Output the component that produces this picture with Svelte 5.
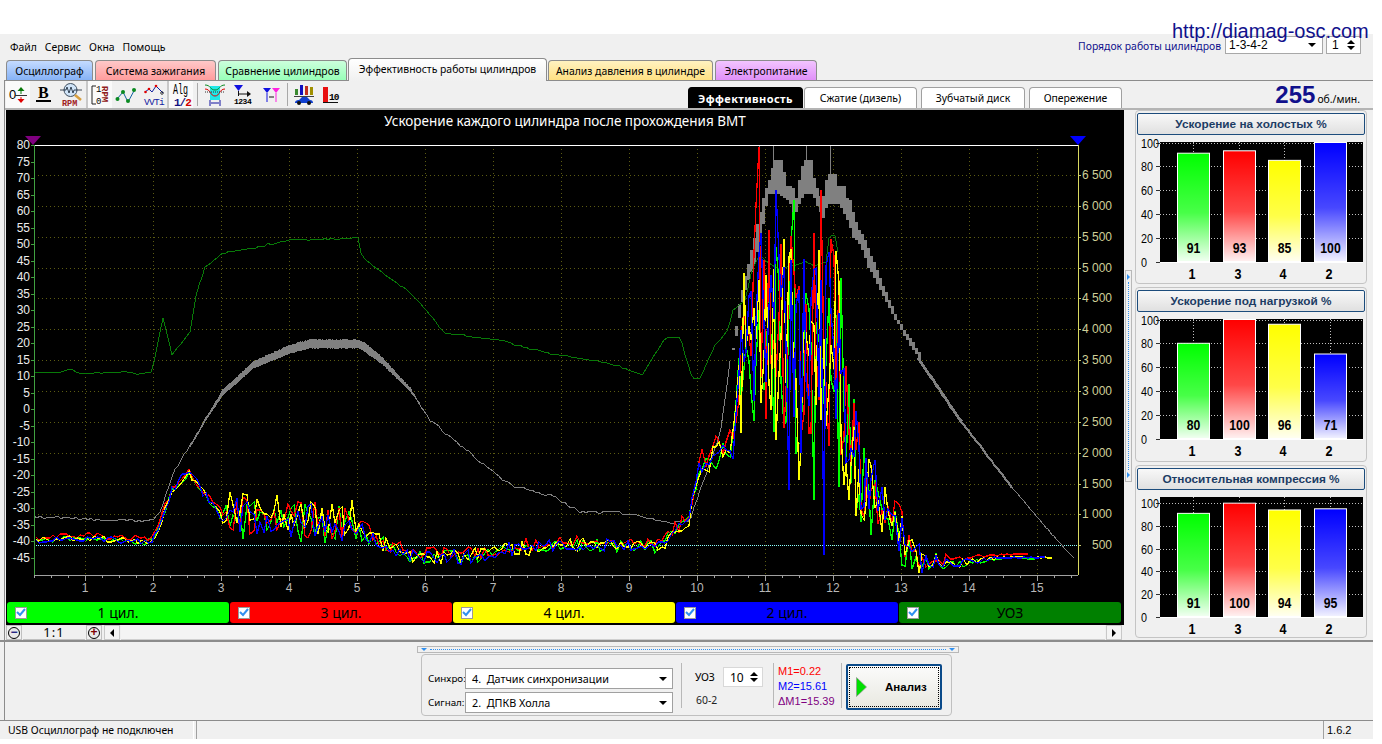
<script>
  // ---------- chart data ----------
  function rng(seed) {
    let s = seed;
    return () => {
      s = (s * 1664525 + 1013904223) % 4294967296;
      return s / 4294967296;
    };
  }
  const interp = (pts, x) => {
    if (x <= pts[0][0]) return pts[0][1];
    for (let i = 1; i < pts.length; i++) {
      if (x <= pts[i][0]) {
        const [a, b] = pts[i - 1];
        const [c, d] = pts[i];
        return b + ((d - b) * (x - a)) / (c - a);
      }
    }
    return pts[pts.length - 1][1];
  };
  const toLine = (pts) => pts.map((p) => p[0].toFixed(0) + ',' + p[1].toFixed(0)).join(' ');

  const base = [[34,541],[60,538],[90,538],[120,540],[150,541],[158,530],[172,490],[182,478],[190,474],[200,488],[212,505],[222,517],[300,522],[358,525],[375,540],[400,552],[424,558],[470,556],[510,549],[560,545],[600,544],[660,546],[675,532],[690,518],[698,470],[715,455],[735,440],[745,340],[760,330],[800,345],[830,345],[842,380],[850,430],[858,470],[867,490],[880,500],[890,517],[902,540],[917,555],[935,562],[960,563],[985,559],[1005,557],[1053,557]];
  const amp = [[34,3],[150,3],[160,4],[222,5],[230,20],[350,20],[365,10],[420,8],[660,6],[690,8],[735,16],[745,100],[840,115],[850,75],[858,50],[867,40],[880,38],[890,22],[902,25],[917,18],[935,10],[960,4],[985,2],[1005,1],[1053,0.5]];
  const bias = [[34,0],[222,0],[232,-9],[350,-9],[365,0],[1053,0]];

  const seriesDefs = [
    { color: '#00ff00', seed: 11, off: 3, b: 0, end: 1036, spikes: { 793: 200, 815: 500 } },
    { color: '#ff0000', seed: 29, off: -8, b: 0.1, end: 1028, spikes: { 759: 147, 756: 205, 822: 190, 769: 230, 840: 280 } },
    { color: '#ffff00', seed: 47, off: 1, b: 1, end: 1053, spikes: { 818: 250, 776: 440, 800: 480 } },
    { color: '#0000ff', seed: 83, off: 2, b: 0.2, end: 1045, spikes: { 777: 190, 823: 555, 790: 490 } }
  ];
  const series = seriesDefs.map((d) => {
    const r = rng(d.seed);
    const pts = [];
    let x = 34 + (d.seed % 3);
    while (x <= d.end) {
      const a = interp(amp, x);
      const y = interp(base, x) + (x > 700 && x < 900 ? d.off : d.off / 3) + d.b * interp(bias, x) + (r() - 0.5) * 2 * a;
      pts.push([x, Math.min(574, y)]);
      x += x > 735 && x < 870 ? 2.5 : 3.4;
    }
    for (const k of Object.keys(d.spikes)) {
      const sx = +k;
      let best = 0;
      pts.forEach((p, i) => {
        if (Math.abs(p[0] - sx) < Math.abs(pts[best][0] - sx)) best = i;
      });
      pts[best][1] = d.spikes[k];
    }
    return { color: d.color, line: toLine(pts) };
  });

  const uozCurve = [[34,372],[60,372],[70,369],[80,373],[110,373],[125,371],[140,374],[152,372],[163,318],[172,355],[190,332],[197,290],[205,268],[225,252],[240,250],[260,246],[275,243],[290,240],[325,239],[358,238],[362,257],[385,275],[410,292],[445,333],[470,336],[500,340],[530,349],[560,355],[590,360],[620,366],[642,375],[665,338],[680,337],[692,378],[700,378],[715,345],[728,330],[733,310],[745,300],[752,270],[760,255],[775,268],[790,267],[805,262],[815,266],[826,262],[828,240],[834,232],[838,252]];
  const uozR = rng(17);
  const uozPts = [];
  for (let x = 34; x <= 838; x += 3) {
    uozPts.push([x, interp(uozCurve, x) + (x > 225 && x < 358 ? (uozR() - 0.5) * 2 : (uozR() - 0.5) * 1.4)]);
  }
  const uoz = toLine(uozPts);

  const grayR = rng(5);
  const grayPts = [[34,517],[150,521],[160,512],[175,470],[195,438],[205,420],[222,393],[253,365],[290,349],[310,344],[358,344],[364,347],[383,362],[410,390],[430,420],[460,445],[490,470],[510,485],[550,495],[580,512],[620,512],[670,523],[690,520],[700,490],[720,435],[732,347]];
  const gray1 = [];
  for (let x = 34; x <= 732; x += 3) gray1.push([x, interp(grayPts, x) + (grayR() - 0.5) * 3]);
  const grayThin = toLine(gray1);

  // hump band: column rects whose thickness grows towards the plateau
  const humpThick = [[190,0.5],[205,1],[222,2.5],[253,3],[290,4],[358,4],[368,4],[383,3],[410,1.5],[420,0.5]];
  let hump = '';
  for (let x = 190; x < 420; x += 1) {
    const y = interp(grayPts, x);
    const t = interp(humpThick, x);
    hump += `M${x} ${(y - t - grayR() * 1.2).toFixed(0)}h1V${(y + t + grayR() * 0.8).toFixed(0)}h-1Z`;
  }

  // peak band: column rects between the traced outer and inner outlines
  const outer = [[732,347],[738,303],[747,263],[753,237],[762,198],[766,185],[770,173],[773,160],[780,160],[782,172],[785,173],[786,185],[792,187],[795,197],[797,185],[802,160],[810,160],[812,173],[815,185],[818,195],[822,195],[823,185],[828,173],[836,173],[837,185],[843,185],[844,197],[848,197],[851,208],[857,228],[863,238],[870,255],[877,273],[887,297],[897,320],[907,335],[920,355]];
  const inner = [[733,350],[738,317],[743,293],[747,280],[753,263],[760,237],[763,217],[767,195],[777,193],[783,197],[790,205],[793,218],[798,203],[803,193],[812,195],[815,205],[822,217],[827,203],[835,203],[839,205],[845,218],[852,237],[860,247],[867,267],[873,277],[883,297],[890,312],[900,330],[913,352],[920,362]];
  let band = '';
  for (let x = 732; x < 920; x += 3) {
    const t = Math.round(interp(outer, x) / 2) * 2;
    const b = Math.max(t + 2, Math.round(interp(inner, x) / 2) * 2);
    band += `M${x} ${t}h3V${b}h-3Z`;
  }
  const descent = [[918,358],[933,380],[960,420],[987,455],[1010,485],[1037,517],[1065,549],[1075,559]];
  const segment = (from, to) => {
    const out = [];
    for (let x = from; x <= to; x += 2) out.push([x, interp(descent, x) + (grayR() - 0.5)]);
    return toLine(out);
  };
  const grayDown3 = segment(918, 962);
  const grayDown2 = segment(960, 1012);
  const grayDown1 = segment(1010, 1075);

  // ---------- chart axes ----------
  const X0 = 17, DX = 68;
  const xMajors = Array.from({ length: 15 }, (_, i) => i + 1);
  const xMinors = Array.from({ length: 62 }, (_, i) => 34 + i * 17);
  const yLeft = Array.from({ length: 26 }, (_, i) => 80 - i * 5);
  const yPos = (v) => 145 + (80 - v) * 3.304;
  const yRight = Array.from({ length: 13 }, (_, i) => 6500 - i * 500);
  const rpmPos = (v) => 175 + (6500 - v) * 0.0617;
  const fmtRpm = (v) => (v >= 1000 ? `${Math.floor(v / 1000)} ${String(v % 1000).padStart(3, '0')}` : String(v));

  // ---------- side cards ----------
  const bars = [
    { n: '1', color: '#00ff00', id: 'g', x: 40 },
    { n: '3', color: '#ff0000', id: 'r', x: 86 },
    { n: '4', color: '#ffff00', id: 'y', x: 131 },
    { n: '2', color: '#0000ff', id: 'b', x: 177 }
  ];
  const cards = [
    { title: 'Ускорение на холостых %', values: [91, 93, 85, 100], top: 100 },
    { title: 'Ускорение под нагрузкой %', values: [80, 100, 96, 71], top: 100 },
    { title: 'Относительная компрессия %', values: [91, 100, 94, 95], top: 105 }
  ];
  const ticks = [0, 20, 40, 60, 80, 100];

  const legend = [
    { label: '1 цил.', cls: 'lg-g' },
    { label: '3 цил.', cls: 'lg-r' },
    { label: '4 цил.', cls: 'lg-y' },
    { label: '2 цил.', cls: 'lg-b' },
    { label: 'УОЗ', cls: 'lg-d' }
  ];
  const tabs = [
    { label: 'Осциллограф', cls: 't-blue' },
    { label: 'Система зажигания', cls: 't-pink' },
    { label: 'Сравнение цилиндров', cls: 't-green' },
    { label: 'Эффективность работы цилиндров', cls: 't-active' },
    { label: 'Анализ давления в цилиндре', cls: 't-yellow' },
    { label: 'Электропитание', cls: 't-violet' }
  ];
  const subtabs = [
    { label: 'Эффективность', cls: 'sel' },
    { label: 'Сжатие (дизель)', cls: 's2' },
    { label: 'Зубчатый диск', cls: 's3' },
    { label: 'Опережение', cls: 's4' }
  ];
</script>

<div class="page">
  <div class="url">http://diamag-osc.com</div>
  <div class="window">
    <div class="menubar">
      <span>Файл</span><span>Сервис</span><span>Окна</span><span>Помощь</span>
      <div class="order">
        <span class="order-label">Порядок работы цилиндров</span>
        <div class="combo-small">1-3-4-2<i class="arrow"></i></div>
        <div class="spin-small">1<b class="updown"><i class="up"></i><i class="arrow"></i></b></div>
      </div>
    </div>

    <div class="tabs">
      {#each tabs as t}
        <div class="tab {t.cls}">{t.label}</div>
      {/each}
    </div>

    <div class="content">
      <div class="toolbar">
        <div class="tb on w24">
          <svg width="20" height="20" viewBox="0 0 20 20"><text x="1" y="14" class="ic-t">0</text><path d="M7 10.500h12" stroke="#333"/><path d="M13 2l-3.500 4h7zM12.500 6h1v3h-1z" fill="#0a7a0a"/><path d="M13 18l-3.500-4h7zM12.500 12h1v3h-1z" fill="#e00000"/></svg>
        </div>
        <div class="tb w28">
          <svg width="18" height="20" viewBox="0 0 18 20"><text x="3" y="13" class="ic-b">B</text><rect x="1" y="15" width="15" height="2" fill="#000"/></svg>
        </div>
        <div class="tb w28">
          <svg width="24" height="25" viewBox="0 0 24 25"><circle cx="10.500" cy="8" r="6.500" fill="#d0e4f8" stroke="#405060"/><path d="M0 8h6l1-3 2 6 2-6 2 6 1-3h8" stroke="#102030" fill="none" stroke-width=".8"/><path d="M15 13l6 5" stroke="#d8a040" stroke-width="2.500"/><text x="2" y="24" class="ic-rpm">RPM</text></svg>
        </div>
        <div class="tb on w25 bl">
          <svg width="18" height="22" viewBox="0 0 18 22"><path d="M5 2H1v18h4" fill="none" stroke="#222"/><text x="5" y="8" class="ic-s">1</text><text x="5" y="20" class="ic-s">0</text><text x="0" y="0" class="ic-rpmv" transform="translate(11 2) rotate(90)">RPM</text></svg>
        </div>
        <div class="tb w28">
          <svg width="22" height="20" viewBox="0 0 22 20"><path d="M2 14l6-7 5 10 7-13" fill="none" stroke="#1060a0"/><circle cx="2.500" cy="14" r="2" fill="#0a8a20"/><circle cx="8" cy="7" r="2" fill="#0a8a20"/><circle cx="13" cy="16" r="2" fill="#0a8a20"/><circle cx="19" cy="5" r="2" fill="#0a8a20"/></svg>
        </div>
        <div class="tb w27">
          <svg width="20" height="23" viewBox="0 0 20 23"><path d="M1 9l4-3 3 3 4-6 4 4 3 3" fill="none" stroke="#1020a0"/><circle cx="1.500" cy="9" r="1.300" fill="#e00000"/><circle cx="5" cy="6" r="1.300" fill="#e00000"/><circle cx="12" cy="3" r="1.300" fill="#e00000"/><circle cx="18" cy="10" r="1.300" fill="none" stroke="#101010" stroke-width=".8"/><text x="0" y="22" class="ic-vv">VVTi</text></svg>
        </div>
        <div class="tb on w26 bl">
          <svg width="16" height="25" viewBox="0 0 16 25"><text x="0" y="12" class="ic-alg" textLength="15" lengthAdjust="spacingAndGlyphs">Alg</text><text x="1" y="24" class="ic-frac" fill="#101080">1/<tspan fill="#d00000">2</tspan></text></svg>
        </div>
        <div class="tb-sep left"></div>
        <div class="tb w28">
          <svg width="20" height="23" viewBox="0 0 20 23"><path d="M5 3h10v14H5z" fill="#20e8e8"/><path d="M0 6c6 0 5 7 10 7s4-7 10-7" fill="none" stroke="#e00000"/><path d="M0 2c6 0 5 5 10 5s4-5 10-5" fill="none" stroke="#0a8a20"/><path d="M0 9h20" stroke="#303030" stroke-dasharray="1 1"/><path d="M5 17v6M15 17v6M6 20h8" stroke="#1010a0"/></svg>
        </div>
        <div class="tb w28">
          <svg width="18" height="21" viewBox="0 0 18 21"><path d="M0 1h9L4.500 7z" fill="#1010e0"/><path d="M4.500 7v5M4.500 10h9" stroke="#101010"/><path d="M13 7l4 3-4 3z" fill="#101010"/><text x="0" y="20" class="ic-1234">1234</text></svg>
        </div>
        <div class="tb w28">
          <svg width="17" height="18" viewBox="0 0 17 18"><path d="M0 2h8L4 7z" fill="#1010e0"/><path d="M4 7v9" stroke="#1010e0"/><path d="M9 2h8l-4 5z" fill="#ff20e0"/><path d="M13 7v9" stroke="#ff20e0"/><path d="M6 11h5" stroke="#101010"/></svg>
        </div>
        <div class="tb-sep"></div>
        <div class="tb w28">
          <svg width="20" height="22" viewBox="0 0 20 22"><rect x="1" y="5" width="3" height="6" fill="#3a8a30"/><rect x="6" y="1" width="3" height="10" fill="#1010c0"/><rect x="11" y="2" width="3" height="9" fill="#c03020"/><rect x="16" y="3" width="3" height="8" fill="#a09000"/><path d="M0 12.500h20" stroke="#404040"/><path d="M1 19c0-3 3-3 4-3l3-3h5l3 3c2 0 3 1 3 3z" fill="#1040d0"/><circle cx="5" cy="19" r="2" fill="#101010"/><circle cx="15" cy="19" r="2" fill="#101010"/></svg>
        </div>
        <div class="tb w24">
          <svg width="15" height="20" viewBox="0 0 15 20"><rect x="0" y="2" width="5" height="15" fill="#e81010"/><path d="M0 17.500h15" stroke="#101010"/><text x="6" y="15" class="ic-10">10</text></svg>
        </div>
        <div class="subtabs">
          {#each subtabs as s}
            <div class="subtab {s.cls}">{s.label}</div>
          {/each}
        </div>
        <div class="rpm"><b>255</b><span>об./мин.</span></div>
      </div>

      <div class="main">
        <div class="left-col">
          <svg class="chart" width="1118" height="490" viewBox="6 110 1118 490">
            <text x="565" y="126" class="title" text-anchor="middle">Ускорение каждого цилиндра после прохождения ВМТ</text>

            {#each yRight as v}
              <line x1="34" x2="1078" y1={Math.round(rpmPos(v)) + 0.5} y2={Math.round(rpmPos(v)) + 0.5} class="grid" />
              <line x1="1078" x2="1081" y1={Math.round(rpmPos(v)) + 0.5} y2={Math.round(rpmPos(v)) + 0.5} stroke="#c8c870" />
              <text x="1112" y={rpmPos(v) + 4} class="rlabel" text-anchor="end">{fmtRpm(v)}</text>
            {/each}
            {#each xMajors as n}
              <line x1={X0 + n * DX + 0.5} x2={X0 + n * DX + 0.5} y1="145" y2="575" class="grid" />
              <text x={X0 + n * DX} y="592" class="xlabel" text-anchor="middle">{n}</text>
            {/each}
            {#each xMinors as x, i}
              <line x1={x + 0.5} x2={x + 0.5} y1="575" y2={(i % 4) === 3 ? 581 : 578} stroke="#a0a0a0" />
            {/each}
            {#each yLeft as v}
              <line x1="31" x2="34" y1={Math.round(yPos(v)) + 0.5} y2={Math.round(yPos(v)) + 0.5} stroke="#40a040" />
              <text x="30" y={yPos(v) + 4} class="ylabel" text-anchor="end">{v}</text>
            {/each}

            <line x1="34" x2="1078" y1="545.5" y2="545.5" class="cyan" />

            <polyline points={grayThin} class="gray" />
            <path d={hump} fill="#808080" shape-rendering="crispEdges" />
            <path d={band} fill="#808080" shape-rendering="crispEdges" />
            <path d="M759.500 146V200M773.500 146V170M806.500 146V170M830.500 146V180" stroke="#808080" shape-rendering="crispEdges" />
            <polyline points={grayDown3} class="gray w3" />
            <polyline points={grayDown2} class="gray w2" />
            <polyline points={grayDown1} class="gray" />

            <polyline points={uoz} class="uoz" />

            {#each series as s}
              <polyline points={s.line} stroke={s.color} class="cyl" />
            {/each}

            <line x1="34" x2="1078" y1="145.5" y2="145.5" stroke="#ffffff" />
            <line x1="34.5" x2="34.5" y1="145" y2="575" stroke="#40a040" />
            <line x1="1078.5" x2="1078.5" y1="145" y2="575" stroke="#d8d860" />
            <line x1="34" x2="1078" y1="575.5" y2="575.5" stroke="#a0a0a0" />
            <path d="M25 136h16l-8 9z" fill="#800080" />
            <path d="M1070 136h16l-8 9z" fill="#0000ff" />
          </svg>

          <div class="legend">
            {#each legend as l}
              <div class="lg {l.cls}">
                <span class="check"><svg width="10" height="9" viewBox="0 0 10 9"><path d="M1 4l3 3 5-6" fill="none" stroke="#3090f0" stroke-width="2" /></svg></span>
                <span class="lg-label">{l.label}</span>
              </div>
            {/each}
          </div>

          <div class="scrollrow">
            <span class="zoomb"><i class="circ">−</i></span>
            <span class="ratio">1:1</span>
            <span class="zoomb"><i class="circ plus">+</i></span>
            <span class="sb"><i class="tri-l"></i></span>
            <span class="track"></span>
            <span class="sb"><i class="tri-r"></i></span>
          </div>
        </div>

        <div class="vsplit">
          <div class="vhandle"><i class="tri-blue"></i><span class="dots"></span><i class="tri-blue"></i></div>
        </div>

        <div class="side">
          {#each cards as c}
            <section class="card">
              <div class="card-head">{c.title}</div>
              <svg width="228" height="146" viewBox="0 0 228 146" class="bar-svg">
                <defs>
                  {#each bars as b}
                    <linearGradient id="{b.id}{c.top}{c.values[0]}{c.values[1]}" x1="0" x2="0" y1="0" y2="1">
                      <stop offset="0" stop-color={b.color} />
                      <stop offset="0.55" stop-color={b.color} stop-opacity="0.72" />
                      <stop offset="1" stop-color={b.color} stop-opacity="0.06" />
                    </linearGradient>
                  {/each}
                </defs>
                <rect x="23" y="5" width="203" height="120" fill="#000" />
                {#each ticks as t}
                  {@const y = 124.5 - (t * 119) / c.top}
                  {#if t > 0}
                    <line x1="23" x2="226" y1={Math.round(y) + 0.5} y2={Math.round(y) + 0.5} class="b-grid" />
                  {/if}
                  <line x1="19" x2="23" y1={Math.round(y) + 0.5} y2={Math.round(y) + 0.5} stroke="#303030" />
                  <text x="4" y={y + 5} class="b-ylab" textLength={String(t).length * 6} lengthAdjust="spacingAndGlyphs">{t}</text>
                {/each}
                {#each bars as b, i}
                  {@const h = (c.values[i] * 119) / c.top}
                  <line x1={b.x + 16.5} x2={b.x + 16.5} y1="5" y2="125" class="b-grid" />
                  <rect x={b.x + 0.5} y={124.5 - h} width="32" height={h} fill="#fff" stroke="#fff" />
                  <rect x={b.x + 1} y={125 - h} width="31" height={h - 1} fill="url(#{b.id}{c.top}{c.values[0]}{c.values[1]})" />
                  <text x={b.x + 16.5 - String(c.values[i]).length * 3.4} y="116" class="b-val" textLength={String(c.values[i]).length * 6.8} lengthAdjust="spacingAndGlyphs">{c.values[i]}</text>
                  <text x={b.x + 11.5} y="141.5" class="b-xlab" textLength="7" lengthAdjust="spacingAndGlyphs">{b.n}</text>
                {/each}
                <line x1="23" x2="226" y1="125.5" y2="125.5" stroke="#fff" />
              </svg>
            </section>
          {/each}
        </div>
      </div>

      <div class="bottom">
        <div class="hsplit"><i class="tri-blue-d"></i><span class="hdots"></span><i class="tri-blue-d"></i></div>
        <div class="group">
          <div class="combos">
            <div class="combo-row"><label>Синхро:</label><div class="combo">4.  Датчик синхронизации<i class="arrow"></i></div></div>
            <div class="combo-row"><label>Сигнал:</label><div class="combo">2.  ДПКВ Холла<i class="arrow"></i></div></div>
          </div>
          <div class="g-sep"></div>
          <div class="uoz-box">
            <div class="uoz-row"><span>УОЗ</span><div class="spin">10<b class="updown"><i class="up"></i><i class="arrow"></i></b></div></div>
            <div class="uoz-note">60-2</div>
          </div>
          <div class="g-sep"></div>
          <div class="m-list">
            <span class="m1">M1=0.22</span>
            <span class="m2">M2=15.61</span>
            <span class="m3">ΔM1=15.39</span>
          </div>
          <div class="g-sep"></div>
          <button class="run">
            <svg width="11" height="20" viewBox="0 0 11 20"><path d="M.5.5l10 9.500-10 9.500z" fill="#00e000" stroke="#909090" stroke-width=".7" /></svg>
            <span>Анализ</span>
          </button>
        </div>
      </div>
    </div>

    <div class="status">
      <div class="st st1">USB Осциллограф не подключен</div>
      <div class="st st2"></div>
      <div class="st st3">1.6.2</div>
    </div>
  </div>
</div>

<style>
  :global(body) {
    margin: 0;
    background: #fff;
  }
  .page {
    position: relative;
    width: 1382px;
    height: 744px;
    overflow: hidden;
    font-family: "Noto Sans", "Liberation Sans", sans-serif;
    font-size: 10.4px;
    color: #000;
  }
  .url {
    position: absolute;
    left: 1172px;
    top: 20px;
    font: 20px "Liberation Sans", sans-serif;
    color: #10108c;
    z-index: 3;
  }
  .window {
    margin-top: 34px;
    width: 1373px;
    height: 705px;
    background: #f0f0f0;
    display: flex;
    flex-direction: column;
  }
  .menubar {
    height: 24px;
    flex: none;
    display: flex;
    align-items: center;
    padding: 0 12px 0 10px;
    gap: 8px;
    margin-top: 1px;
    margin-bottom: -1px;
  }
  .order {
    margin-left: auto;
    display: flex;
    align-items: center;
    gap: 4px;
    margin-top: -2px;
  }
  .order-label {
    color: #10108c;
  }
  .combo-small,
  .spin-small {
    height: 18px;
    box-sizing: border-box;
    border: 1px solid #a8a8a8;
    background: #fff;
    display: flex;
    align-items: center;
    font: 12px "Liberation Sans", sans-serif;
    padding-left: 3px;
    margin-bottom: 3px;
  }
  .combo-small {
    width: 98px;
    justify-content: space-between;
    padding-right: 6px;
  }
  .spin-small {
    width: 35px;
    justify-content: space-between;
    padding: 0 5px;
    margin-left: -1px;
  }
  .arrow {
    width: 0;
    height: 0;
    border: 4px solid transparent;
    border-top: 4px solid #000;
    border-bottom: 0;
    display: block;
  }
  .up {
    width: 0;
    height: 0;
    border: 4px solid transparent;
    border-bottom: 4px solid #000;
    border-top: 0;
    display: block;
  }
  .updown {
    display: flex;
    flex-direction: column;
    gap: 2px;
  }
  .tabs {
    height: 22px;
    flex: none;
    display: flex;
    align-items: flex-end;
    padding-left: 6px;
    gap: 2px;
    position: relative;
    z-index: 2;
  }
  .tab {
    box-sizing: border-box;
    height: 20px;
    border: 1px solid #8c8c8c;
    border-bottom: 0;
    border-radius: 4px 4px 0 0;
    display: flex;
    align-items: center;
    justify-content: center;
    white-space: nowrap;
  }
  .t-blue { background: linear-gradient(#c4dbff, #86b2f6); width: 87px; }
  .t-pink { background: linear-gradient(#ffc8c8, #ff9c9c); width: 121px; }
  .t-green { background: linear-gradient(#ccffdc, #98ffb8); width: 129px; }
  .t-active { background: linear-gradient(#fff, #f0f0f0); height: 23px; width: 199px; margin: 0 -1px -1px -1px; padding-bottom: 2px; }
  .t-yellow { background: linear-gradient(#fff2c0, #ffe083); width: 165px; }
  .t-violet { background: linear-gradient(#f2c4ff, #e090f8); width: 102px; }
  .content {
    flex: 1;
    min-height: 0;
    margin-left: 4px;
    border-top: 1px solid #8c8c8c;
    border-left: 1px solid #8c8c8c;
    display: flex;
    flex-direction: column;
    position: relative;
  }
  .toolbar {
    height: 27px;
    flex: none;
    display: flex;
    align-items: stretch;
    padding-left: 1px;
    border-bottom: 2px solid #b4b4b4;
    box-sizing: content-box;
  }
  .tb {
    display: flex;
    align-items: center;
    justify-content: center;
    box-sizing: border-box;
    flex: none;
  }
  .tb svg { overflow: visible; }
  .tb.on { background: #fafafa; }
  .bl { border-left: 2px solid #c8c8c8; }
  .w24 { width: 24px; }
  .w25 { width: 26px; }
  .w26 { width: 26px; }
  .w27 { width: 27px; }
  .w28 { width: 28px; }
  .tb-sep {
    width: 1px;
    background: #a8a8a8;
    margin: 2px;
    flex: none;
  }
  .tb-sep.left { margin-left: 4px; margin-right: 3px; }
  .ic-t { font: 13px "Liberation Sans", sans-serif; }
  .ic-b { font: bold 16px "Liberation Serif", serif; }
  .ic-rpm { font: bold 8.500px "Liberation Mono", monospace; fill: #a02020; }
  .ic-rpmv { font: bold 9px "Liberation Mono", monospace; fill: #902020; }
  .ic-s { font: 9px "Liberation Mono", monospace; }
  .ic-vv { font: 9.500px "Liberation Mono", monospace; fill: #1020a0; letter-spacing: -.7px; }
  .ic-alg { font: 14px "Liberation Mono", monospace; }
  .ic-frac { font: bold 11px "Liberation Mono", monospace; letter-spacing: -1px; }
  .ic-1234 { font: bold 8px "Liberation Mono", monospace; letter-spacing: -.5px; }
  .ic-10 { font: bold 9.500px "Liberation Mono", monospace; letter-spacing: -1px; }
  .subtabs {
    position: absolute;
    left: 683px;
    top: 6px;
    height: 21px;
    display: flex;
  }
  .subtab {
    box-sizing: border-box;
    height: 21px;
    border: 1px solid #a0a0a0;
    border-bottom: 0;
    border-radius: 4px 4px 0 0;
    background: #fff;
    display: flex;
    align-items: center;
    justify-content: center;
    margin-right: 4px;
    white-space: nowrap;
  }
  .subtab.sel {
    background: #000;
    border-color: #000;
    color: #fff;
    font-weight: bold;
    font-size: 11px;
    letter-spacing: .4px;
    width: 115px;
    margin-right: 1px;
  }
  .s2 { width: 113px; }
  .s3 { width: 104px; }
  .s4 { width: 93px; }
  .rpm {
    position: absolute;
    right: 13px;
    top: 0;
    height: 27px;
    display: flex;
    align-items: baseline;
    gap: 2px;
  }
  .rpm b {
    font: bold 24px/27px "Liberation Sans", sans-serif;
    color: #10108c;
  }
  .rpm span {
    font-size: 10.400px;
    color: #000;
  }
  .main {
    height: 530px;
    flex: none;
    display: flex;
  }
  .left-col {
    margin-left: 1px;
    width: 1118px;
    display: flex;
    flex-direction: column;
    flex: none;
  }
  .chart {
    display: block;
    background: #000;
    flex: none;
  }
  .title { font: 13.500px "Noto Sans", sans-serif; fill: #fff; }
  .grid { stroke: #5c5c12; stroke-dasharray: 1 3; shape-rendering: crispEdges; }
  .rlabel { font: 12px "Liberation Sans", sans-serif; fill: #cfcf98; }
  .xlabel { font: 12px "Liberation Sans", sans-serif; fill: #b8b8b8; }
  .ylabel { font: 12px "Liberation Sans", sans-serif; fill: #ececec; }
  .cyan { stroke: #8cffff; stroke-dasharray: 1 1; shape-rendering: crispEdges; }
  .gray { stroke: #808080; fill: none; shape-rendering: crispEdges; }
  .gray.w3 { stroke-width: 3; }
  .gray.w2 { stroke-width: 2; }
  .uoz { stroke: #087a08; fill: none; shape-rendering: crispEdges; }
  .cyl { fill: none; shape-rendering: crispEdges; stroke-width: 1.300; }
  .legend {
    height: 25px;
    flex: none;
    background: #000;
    display: flex;
    padding: 2px 0 2px 1px;
    box-sizing: border-box;
    gap: 1px;
    overflow: hidden;
  }
  .lg {
    width: 222px;
    flex: none;
    border-radius: 3px;
    display: flex;
    align-items: center;
    position: relative;
    padding-left: 8px;
    box-sizing: border-box;
  }
  .lg-label {
    position: absolute;
    left: 0;
    right: 0;
    text-align: center;
    font: 14px "Noto Sans", sans-serif;
  }
  .check {
    width: 12px;
    height: 12px;
    box-sizing: border-box;
    background: #fff;
    border: 1px solid #9a9a9a;
    display: flex;
    align-items: center;
    justify-content: center;
  }
  .lg-g { background: #00ff00; }
  .lg-r { background: #ff0000; }
  .lg-y { background: #ffff00; }
  .lg-b { background: #0000ff; }
  .lg-d { background: #008000; }
  .scrollrow {
    height: 15px;
    flex: none;
    display: flex;
    align-items: stretch;
    background: #f0f0f0;
    gap: 1px;
    padding-right: 2px;
  }
  .zoomb {
    width: 16px;
    flex: none;
    display: flex;
    align-items: center;
    justify-content: center;
    border: 1px solid #c0c0c0;
    box-sizing: border-box;
  }
  .circ {
    width: 12px;
    height: 12px;
    border-radius: 50%;
    border: 1px solid #000;
    box-sizing: border-box;
    font: bold 12px/9px "Liberation Sans", sans-serif;
    text-align: center;
    color: #202080;
    font-style: normal;
    background: #e8e8e8;
  }
  .circ.plus { color: #800000; }
  .ratio {
    width: 62px;
    flex: none;
    text-align: center;
    font: 13px/15px "Noto Sans", sans-serif;
    letter-spacing: 1px;
    border-bottom: 1px solid #c0c0c0;
  }
  .sb {
    width: 16px;
    flex: none;
    display: flex;
    align-items: center;
    justify-content: center;
    border: 1px solid #c8c8c8;
    box-sizing: border-box;
    background: #f4f4f4;
    margin-left: 1px;
  }
  .sb:last-child { margin-left: 0; }
  .track { flex: 1; background: #f4f4f4; border-bottom: 1px solid #d0d0d0; }
  .tri-l { border: 4px solid transparent; border-right: 4px solid #000; border-left: 0; }
  .tri-r { border: 4px solid transparent; border-left: 4px solid #000; border-right: 0; }
  .vsplit {
    width: 7px;
    margin-left: 1px;
    flex: none;
    position: relative;
  }
  .vhandle {
    position: absolute;
    left: 0;
    top: 160px;
    width: 7px;
    height: 212px;
    border: 1px solid #b8b8b8;
    box-sizing: border-box;
    display: flex;
    flex-direction: column;
    align-items: center;
    padding: 3px 0;
    gap: 2px;
  }
  .tri-blue { border: 3px solid transparent; border-left: 3px solid #3090f0; border-right: 0; }
  .dots { flex: 1; border-left: 1px dotted #3090f0; }
  .side {
    width: 232px;
    margin-left: 3px;
    flex: none;
    display: flex;
    flex-direction: column;
    gap: 3px;
  }
  .card {
    border: 1px solid #c4c4c4;
    border-radius: 4px;
    height: 174px;
    box-sizing: border-box;
    padding: 2px 1px;
    display: flex;
    flex-direction: column;
  }
  .card:nth-child(2) { height: 175px; }
  .card:nth-child(3) { height: 173px; }
  .card-head {
    height: 22px;
    flex: none;
    box-sizing: border-box;
    border: 1px solid #1c4c7c;
    border-radius: 2px;
    background: linear-gradient(#f8f8f8, #e0e0e0);
    text-align: center;
    font: bold 11.800px/20px "Liberation Sans", sans-serif;
    color: #1c3c64;
  }
  .bar-svg { display: block; overflow: visible; margin-top: 2px; }
  .b-grid { stroke: #c0c0c0; stroke-dasharray: 1 2; shape-rendering: crispEdges; }
  .b-ylab { font: 13px "Liberation Sans", sans-serif; fill: #000; }
  .b-val { font: bold 15px "Liberation Sans", sans-serif; fill: #000; }
  .b-xlab { font: bold 15px "Liberation Sans", sans-serif; fill: #000; }
  .bottom {
    flex: none;
    height: 81px;
    padding-left: 412px;
    border-top: 2px solid #8c8c8c;
    border-bottom: 1px solid #8c8c8c;
    box-sizing: border-box;
    position: relative;
    margin-left: -5px;
  }
  .hsplit {
    margin-top: 4px;
    margin-left: 5px;
    width: 542px;
    height: 7px;
    border: 1px solid #b8b8b8;
    box-sizing: border-box;
    display: flex;
    align-items: center;
    padding: 0 3px;
    gap: 3px;
  }
  .tri-blue-d { border: 3px solid transparent; border-top: 3px solid #3090f0; border-bottom: 0; }
  .hdots { flex: 1; border-top: 1px dotted #3090f0; }
  .group {
    margin-left: 9px;
    margin-top: 1px;
    width: 531px;
    height: 62px;
    box-sizing: border-box;
    border: 1px solid #c0c0c0;
    border-radius: 4px;
    display: flex;
    align-items: stretch;
    padding: 8px 0 5px 6px;
  }
  .combos {
    display: flex;
    flex-direction: column;
    gap: 3px;
    width: 253px;
    flex: none;
    padding-top: 5px;
  }
  .combo-row {
    display: flex;
    align-items: center;
    gap: 3px;
  }
  .combo-row label { width: 34px; font-size: 9.800px; white-space: nowrap; }
  .combo {
    width: 208px;
    height: 21px;
    box-sizing: border-box;
    border: 1px solid #a0a0a0;
    background: #fff;
    display: flex;
    align-items: center;
    justify-content: space-between;
    padding: 0 5px 0 6px;
    font-size: 10.800px;
    white-space: pre;
  }
  .g-sep {
    width: 1px;
    background: #b8b8b8;
    flex: none;
    margin: 0 0 2px;
  }
  .uoz-box {
    width: 91px;
    flex: none;
    padding: 4px 0 0 13px;
    box-sizing: border-box;
    display: flex;
    flex-direction: column;
    gap: 6px;
  }
  .uoz-row {
    display: flex;
    align-items: center;
    gap: 6px;
  }
  .uoz-row span { width: 22px; }
  .spin {
    width: 40px;
    height: 20px;
    box-sizing: border-box;
    background: #fff;
    border: 1px solid #d8d8d8;
    display: flex;
    align-items: center;
    justify-content: space-between;
    padding: 0 4px 0 6px;
    font-size: 12px;
  }
  .uoz-note { color: #222; padding-left: 1px; }
  .m-list {
    width: 67px;
    flex: none;
    box-sizing: border-box;
    padding: 1px 0 0 4px;
    display: flex;
    flex-direction: column;
    font: 11px/15px "Liberation Sans", sans-serif;
  }
  .m1 { color: #ff0000; }
  .m2 { color: #0000ff; }
  .m3 { color: #800080; }
  .run {
    margin: 1px 0 0 4px;
    width: 96px;
    height: 46px;
    box-sizing: border-box;
    border: 2px solid #0a4a8a;
    outline: 1px dotted #000;
    outline-offset: -4px;
    border-radius: 2px;
    background: linear-gradient(#fbfbfb, #e8e8e0);
    display: flex;
    align-items: center;
    padding: 0 0 0 8px;
    font: bold 11.500px "Liberation Sans", sans-serif;
  }
  .run span { margin-left: 18px; }
  .status {
    height: 18px;
    flex: none;
    display: flex;
    gap: 2px;
    margin-left: 4px;
  }
  .st {
    box-sizing: border-box;
    border-left: 1px solid #a0a0a0;
    line-height: 18px;
    padding-left: 3px;
    white-space: nowrap;
    font-size: 10.400px;
  }
  .st1 { width: 190px; border-left: 0; padding-left: 4px; border-right: 1px solid #fff; }
  .st2 { flex: 1; }
  .st3 { width: 50px; font: 11px/18px "Liberation Sans", sans-serif; }
</style>
